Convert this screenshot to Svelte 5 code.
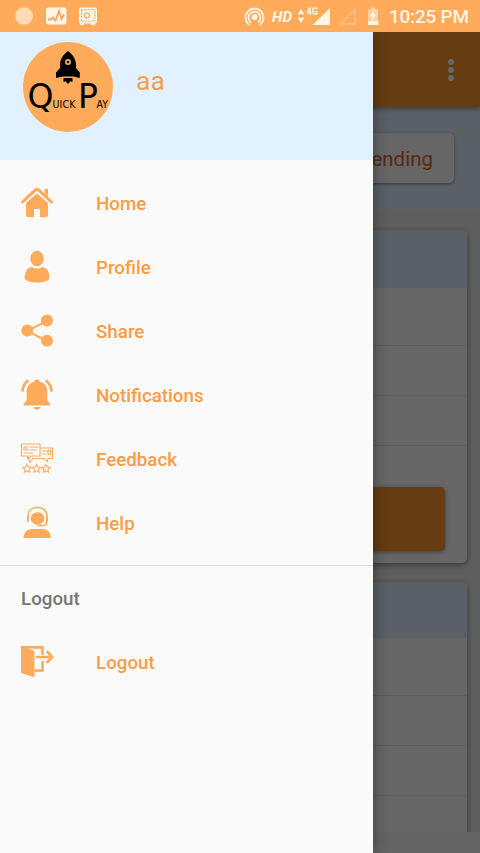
<script>
  const items = ['Home', 'Profile', 'Share', 'Notifications', 'Feedback', 'Help']
  const rows = [1, 2, 3]
  const stars = [7, 16.5, 26]
</script>

{#snippet icon(name)}
  <svg class="icon" viewBox="0 0 34 34">
    {#if name === 'Home'}
      <path d="M6 17 17 7.500l11 9.500v12q0 2-2 2h-6v-8h-6v8H8q-2 0-2-2z" />
      <path class="line thick" d="M2.500 16 15.200 4.200q1.800-1.700 3.600 0l12.700 11.800" />
      <path d="M24.500 3H28v8l-3.500-3z" />
    {:else if name === 'Profile'}
      <ellipse cx="17" cy="8.500" rx="6.700" ry="7.800" />
      <path d="M4.700 28c0-7 2.500-10 7-11 3.500 2 7.300 2 10.700 0 4.500 1 7 4 7 11 0 2.500-5.500 4.500-12.400 4.500S4.700 30.500 4.700 28z" />
    {:else if name === 'Share'}
      <path class="line" d="M27 7 7 17l20 10" />
      <circle cx="27" cy="6.500" r="6" />
      <circle cx="7.300" cy="16.500" r="6" />
      <circle cx="27" cy="26.700" r="6" />
    {:else if name === 'Notifications'}
      <path d="M17 1.500c1.600 0 2.700 1 2.700 2.300 4.700 1 7.600 4.600 7.600 9.300V22l3 4.200v1.300H3.700v-1.300l3-4.200v-8.900c0-4.700 2.900-8.300 7.600-9.300 0-1.300 1.100-2.300 2.700-2.300z" />
      <path d="M13.500 29h7c-.8 3.700-6.200 3.700-7 0z" />
      <path class="line mid" d="M7.500 3C4.500 5.500 3 8.500 2.500 12.500M26.500 3c3 2.500 4.500 5.500 5 9.500" />
    {:else if name === 'Feedback'}
      <g class="line thin">
        <path d="M1.500 2h18.500v12H11l-3 2.500V14H1.500zM20 6h12.500v10.500H28l-.5 3-4-3H13l-3 4-1-4h-1.500v-2.500" />
        <path d="M4 5h3v3H4zM10 5h8M10 8h6M4 11h9M22.500 9h4M22.500 12h3M28 8h2.500v4.500H28z" />
        {#each stars as x}
          <path d="m{x} 22.500 1.300 2.600 2.800.3-2 1.900.5 2.900-2.600-1.400-2.600 1.400.5-2.900-2-1.900 2.800-.3z" />
        {/each}
      </g>
    {:else if name === 'Help'}
      <path d="M3.700 32c0-5.500 3-9 8-9h11c5 0 8 3.500 8 9z" />
      <ellipse cx="17.500" cy="12.500" rx="6.800" ry="6.200" />
      <path class="line fine" d="M7.800 12v-1.500C7.800 5 11.500 1.300 17.300 1.300S27 5 27 10.500V14q0 5.500-4 5.500h-5" />
      <path d="M7 9.500h1.800v7Q7 16.500 7 14.500zM26 9.500h1.800v5q0 2-1.800 2z" />
    {:else}
      <path d="M1 1.500 14.500 6v26.500L1 28z" />
      <path class="line mid" d="M2 2.300h20.500v6.500M15 25.500h7.500V17" />
      <path class="line mid" d="M17 12h14M27.500 7l4.700 5-4.700 5" />
    {/if}
  </svg>
{/snippet}

<div class="screen">
  <header class="status">
    <svg viewBox="0 0 480 32">
      <circle cx="24" cy="16" r="9" opacity=".65" />
      <rect x="46" y="7.500" width="20.500" height="17" rx="2" />
      <path class="orange" d="M48 19.500h3l2-2 2.500 3L59 11l2.500 8 2.500-4.500" />
      <rect x="79" y="7.500" width="18" height="16" rx="2" />
      <path d="M80 23h4v2h-4zM91 23h4v2h-4z" />
      <rect class="orange dotted" x="81.500" y="9.700" width="13.500" height="11.500" />
      <circle class="orange ring" cx="87" cy="15.500" r="2.500" />
      <circle cx="254.500" cy="17" r="3" />
      <path class="white" d="M251 22.500a6 6 0 1 1 7 0M249.500 25a9 9 0 1 1 10 0" />
      <text class="hd" x="272" y="21.500" textLength="20" lengthAdjust="spacingAndGlyphs">HD</text>
      <path d="m301 9 3.500 5.500h-7zM301 23l-3.500-5.500h7z" />
      <text class="net" x="306.500" y="15" textLength="11.500" lengthAdjust="spacingAndGlyphs">4G</text>
      <path d="M330 8v17h-17.500z" />
      <path class="white empty" d="M355 9.500V24h-15z" />
      <path opacity=".5" d="M371 7h4v2h3v13h-10V9h3z" />
      <path d="M368 21h10.500v4H368zM374.500 10l-5 6.500h3l-1 4.500 5-6.500h-3z" />
      <text class="clock" x="389" y="22.700" textLength="80">10:25 PM</text>
    </svg>
  </header>

  <div class="body">
    <main>
      <div class="toolbar">
        <svg viewBox="0 0 6 24"><circle cx="3" cy="4" r="3" /><circle cx="3" cy="12" r="3" /><circle cx="3" cy="20" r="3" /></svg>
      </div>
      <div class="tabs"><button>Pending</button></div>
      <section class="first">
        <h2></h2>
        {#each rows as row}<div class="row" class:tall={row === 1}></div>{/each}
        <button class="action" aria-label="Action"></button>
      </section>
      <section class="second">
        <h2></h2>
        {#each rows as row}<div class="row" class:tall={row === 1}></div>{/each}
      </section>
    </main>

    <div class="scrim"></div>

    <aside>
      <div class="account">
        <svg class="logo" viewBox="0 0 90 90">
          <circle class="disc" cx="45" cy="45" r="45" />
          <path fill-rule="evenodd" d="M45 9c5 3.500 8 8.500 8 14v3l3.800 4.500V36l-6.300-1.500h-11L33 36v-5.500L37 26v-3c0-5.500 3-10.500 8-14zm0 8a3 3 0 1 0 0 6 3 3 0 0 0 0-6z" />
          <circle cx="45" cy="20" r="1.300" />
          <path d="M40.500 36h9v4l-2-.8L45 42l-2.500-2.800-2 .8z" />
          <text class="big" x="4.500" y="66">Q</text>
          <text class="small" x="29.500" y="66" textLength="23">UICK</text>
          <text class="big" x="55" y="66">P</text>
          <text class="small" x="73.500" y="66" textLength="11.500" lengthAdjust="spacingAndGlyphs">AY</text>
        </svg>
        <span>aa</span>
      </div>
      <nav>
        {#each items as item}
          <div class="item">{@render icon(item)}<span>{item}</span></div>
        {/each}
      </nav>
      <div class="group">
        <h3>Logout</h3>
        <div class="item">{@render icon('Logout')}<span>Logout</span></div>
      </div>
    </aside>
  </div>
</div>

<style>
  :global(body) {
    margin: 0;
    font-family: Roboto, sans-serif;
  }
  .screen {
    width: 480px;
    height: 853px;
    overflow: hidden;
    display: flex;
    flex-direction: column;
  }
  .status {
    height: 32px;
    flex: none;
    background: #ffab5b;
  }
  .status svg {
    display: block;
    fill: #fff5e4;
  }
  .status .orange {
    fill: none;
    stroke: #f2a75e;
    stroke-width: 1.8;
  }
  .status .dotted {
    stroke-width: 1;
    stroke-dasharray: 2 1;
  }
  .status .ring {
    stroke-width: 1.2;
  }
  .white {
    fill: none;
    stroke: #fff5e4;
    stroke-width: 1.8;
  }
  .empty {
    opacity: 0.35;
    stroke-width: 1.4;
  }
  .hd {
    font: italic 700 14.5px Roboto, sans-serif;
  }
  .net {
    font: 700 11px Roboto, sans-serif;
  }
  .clock {
    font: 500 19px Roboto, sans-serif;
  }
  .body {
    position: relative;
    flex: 1;
    overflow: hidden;
    background: #fafafa;
  }
  main {
    height: 800px;
    overflow: hidden;
    background: #ececec;
  }
  .toolbar {
    position: relative;
    height: 75px;
    background: #ff962f;
    box-shadow: 0 2px 5px rgba(0, 0, 0, 0.35);
    display: flex;
    justify-content: flex-end;
    align-items: center;
    padding-right: 26px;
    box-sizing: border-box;
  }
  .toolbar svg {
    width: 6px;
    height: 24px;
    fill: #fff;
  }
  .tabs {
    height: 103px;
    box-sizing: border-box;
    padding: 26px 26px 0;
    background: #e4effe;
    display: flex;
    justify-content: flex-end;
  }
  button {
    border: 0;
    border-radius: 5px;
  }
  .tabs button {
    width: 200px;
    height: 50px;
    padding: 1px 21px 0 0;
    background: #fff;
    box-shadow: 0 1px 3px rgba(0, 0, 0, 0.4);
    color: #e8641e;
    font: 20.5px Roboto, sans-serif;
    text-align: right;
  }
  section {
    margin: 20px 13px 0;
    background: #fff;
    border-radius: 5px;
    box-shadow: 0 2px 6px rgba(0, 0, 0, 0.4);
    overflow: hidden;
  }
  .first {
    height: 333px;
  }
  .second {
    margin-top: 19px;
    height: 300px;
  }
  h2 {
    margin: 0;
    height: 58px;
    background: #e4effe;
  }
  .second h2 {
    height: 56px;
  }
  .row {
    height: 50px;
    box-sizing: border-box;
    border-bottom: 1px solid #e8e8e8;
  }
  .row.tall {
    height: 58px;
  }
  .action {
    display: block;
    width: 411px;
    height: 64px;
    margin: 41px 22px 0 auto;
    background: #ff962f;
    box-shadow: 0 1px 4px rgba(0, 0, 0, 0.4);
  }
  .scrim {
    position: absolute;
    inset: 0;
    background: rgba(0, 0, 0, 0.6);
  }
  aside {
    position: absolute;
    top: 0;
    left: 0;
    width: 373px;
    height: 100%;
    background: #fafafa;
    box-shadow: 0 0 15px rgba(0, 0, 0, 0.4);
  }
  .account {
    height: 128px;
    box-sizing: border-box;
    padding: 10px 0 0 23px;
    display: flex;
    gap: 23px;
    background: #e2f1ff;
    color: #f4a04f;
    font-size: 26.5px;
    line-height: 78px;
  }
  .logo {
    width: 90px;
    height: 90px;
  }
  .disc {
    fill: #ffab5b;
  }
  .big {
    font: 33px 'DejaVu Sans', sans-serif;
  }
  .small {
    font: 9.6px 'DejaVu Sans', sans-serif;
  }
  nav {
    height: 406px;
    padding-top: 11px;
    box-sizing: border-box;
    border-bottom: 1px solid #dadada;
  }
  .item {
    height: 64px;
    padding-left: 20px;
    display: flex;
    align-items: center;
    gap: 42px;
    color: #f99d45;
    font-size: 18.75px;
    font-weight: 500;
  }
  .item span {
    padding-top: 2px;
  }
  .icon {
    width: 34px;
    height: 34px;
    fill: #ffab5b;
  }
  .line {
    fill: none;
    stroke: #ffab5b;
    stroke-width: 2;
    stroke-linecap: round;
  }
  .thick {
    stroke-width: 3;
  }
  .mid {
    stroke-width: 2.7;
  }
  .fine {
    stroke-width: 1.5;
  }
  .thin {
    stroke-width: 1.1;
  }
  h3 {
    margin: 0;
    padding-left: 21px;
    height: 64px;
    font-size: 18.75px;
    font-weight: 500;
    line-height: 67px;
    color: #757575;
  }
</style>
